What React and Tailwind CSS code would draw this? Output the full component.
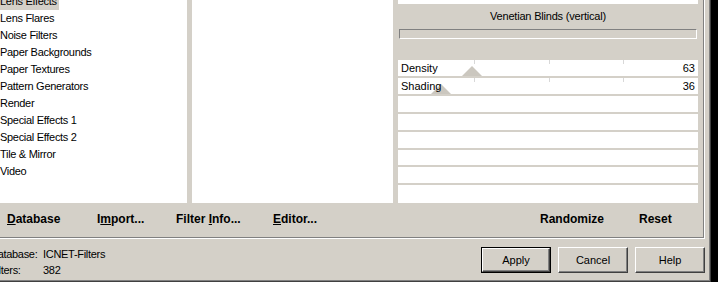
import React from 'react';

const filters = [
  'Lens Effects',
  'Lens Flares',
  'Noise Filters',
  'Paper Backgrounds',
  'Paper Textures',
  'Pattern Generators',
  'Render',
  'Special Effects 1',
  'Special Effects 2',
  'Tile & Mirror',
  'Video',
];

const params = [
  { name: 'Density', value: 63, thumb: 74 },
  { name: 'Shading', value: 36, thumb: 43 },
];

function Thumb({ x }) {
  return (
    <svg className="absolute bottom-0" style={{ left: x - 10 }} width="20" height="10" viewBox="0 0 20 10">
      <polygon points="10,0 20,10 0,10" fill="#cbc7bf" />
    </svg>
  );
}

function ParamRow({ param, last }) {
  return (
    <div className={`relative h-[18px] bg-white ${last ? '' : 'border-b-2 border-[#d4d0c8]'}`}>
      {param && [76, 151, 225].map((t) => (
        <div key={t} className="absolute top-0 w-px h-[4px] bg-[#d8d8d8]" style={{ left: t }} />
      ))}
      {param && <Thumb x={param.thumb} />}
      {param && (
        <div className="relative flex justify-between px-[3px] leading-[16px] text-[11px] text-black">
          <span>{param.name}</span>
          <span>{param.value}</span>
        </div>
      )}
    </div>
  );
}

function WinButton({ children, isDefault }) {
  return (
    <div className={`w-[70px] h-[26px] ${isDefault ? 'border border-black' : ''}`}>
      <div className="w-full h-full border-t border-l border-white border-b border-r border-b-[#404040] border-r-[#404040] shadow-[inset_-1px_-1px_#808080] flex items-center justify-center text-[11px] text-black">
        {children}
      </div>
    </div>
  );
}

export default function App() {
  return (
    <div className="w-[718px] h-[282px] flex bg-black overflow-hidden font-['Liberation_Sans',Arial,sans-serif]">
      {/* window frame */}
      <div className="w-[711px] h-[282px] border-r border-b border-[#404040]">
        <div className="w-[710px] h-[281px] border-r border-b border-[#808080] bg-[#d4d0c8] flex flex-col">
          {/* group box */}
          <div className="w-[705px] h-[239px] border-r border-b border-white">
            <div className="w-[704px] h-[238px] border-r border-b border-[#808080] flex flex-col">
              <div className="h-[203px] flex">
                {/* filter categories */}
                <div className="w-[187px] bg-white overflow-hidden">
                  <div className="-mt-[7px] -ml-[2px] text-[11px] leading-[17px] tracking-[-0.3px] text-black">
                    {filters.map((f, i) => (
                      <div key={f} className="h-[17px]">
                        <span className={`inline-block h-[17px] pl-[2px] pr-[2px] ${i === 0 ? 'bg-[#d4d0c8]' : ''}`}>{f}</span>
                      </div>
                    ))}
                  </div>
                </div>
                <div className="w-[5px]" />
                {/* filter list */}
                <div className="w-[201px] bg-white" />
                <div className="w-[5px]" />
                {/* controls */}
                <div className="w-[300px] flex flex-col">
                  <div className="h-[4px] bg-white" />
                  <div className="h-[24px] pt-[1px] flex items-center justify-center text-[11px] tracking-[-0.2px] text-black">Venetian Blinds (vertical)</div>
                  <div className="mt-[1px] mx-[1px] h-[10px] border-t border-l border-[#808080] border-b border-r border-b-white border-r-white" />
                  <div className="h-[22px]" />
                  {Array.from({ length: 8 }).map((_, i) => (
                    <ParamRow key={i} param={params[i]} last={i === 7} />
                  ))}
                </div>
              </div>
              {/* action labels */}
              <div className="flex-1 flex items-center pb-[3px] text-[12px] font-bold text-black">
                <span className="ml-[7px] w-[90px]"><u>D</u>atabase</span>
                <span className="w-[79px]">I<u>m</u>port...</span>
                <span className="w-[97px]">Filter <u>I</u>nfo...</span>
                <span className="w-[267px]"><u>E</u>ditor...</span>
                <span className="w-[99px]">Randomize</span>
                <span>Reset</span>
              </div>
            </div>
          </div>
          {/* status */}
          <div className="flex-1 flex pt-[8px] pr-[4px]">
            <div className="-ml-[10px] mt-[1px] grid grid-cols-[53px_auto] text-[11px] leading-[13px] tracking-[-0.3px] text-black">
              <span>Database:</span>
              <span>ICNET-Filters</span>
              <span>Filters:</span>
              <span>382</span>
            </div>
            <div className="ml-auto flex gap-[7px]">
              <WinButton isDefault>Apply</WinButton>
              <WinButton>Cancel</WinButton>
              <WinButton>Help</WinButton>
            </div>
          </div>
        </div>
      </div>
    </div>
  );
}
